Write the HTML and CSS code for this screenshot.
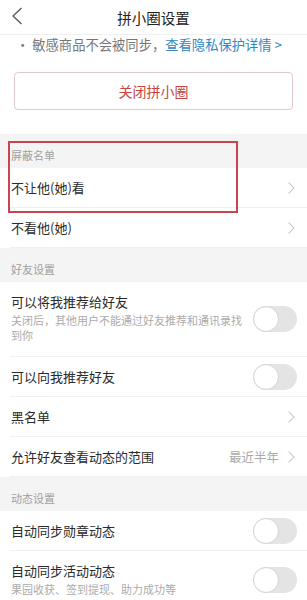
FILE: index.html
```html
<!DOCTYPE html>
<html lang="zh-CN">
<head>
    <meta charset="UTF-8">
    <meta name="viewport" content="width=device-width, initial-scale=1.0">
    <title>拼小圈设置</title>
    <link rel="stylesheet" href="styles.css">
</head>
<body>
    <div class="topbar">
        <svg class="back" width="12" height="18" viewBox="0 0 12 18"><path d="M10.5 1 L2 9 L10.5 17" fill="none" stroke="#555" stroke-width="1.3"/></svg>
        <div class="title">拼小圈设置</div>
    </div>

    <div class="notice">• 敏感商品不会被同步，<span class="link">查看隐私保护详情 &gt;</span></div>

    <div class="btn-wrap">
        <button class="btn-close">关闭拼小圈</button>
    </div>

    <!-- 屏蔽名单 -->
    <div class="marked">
        <div class="section-title">屏蔽名单</div>
        <div class="row">
            <span class="label">不让他(她)看</span>
            <span class="arrow"></span>
        </div>
        <div class="mark-box"></div>
    </div>
    <div class="row">
        <span class="label">不看他(她)</span>
        <span class="arrow"></span>
    </div>

    <!-- 好友设置 -->
    <div class="section-title">好友设置</div>
    <div class="row tall">
        <div class="text">
            <div class="label">可以将我推荐给好友</div>
            <div class="desc">关闭后，其他用户不能通过好友推荐和通讯录找<br>到你</div>
        </div>
        <span class="switch"></span>
    </div>
    <div class="row">
        <span class="label">可以向我推荐好友</span>
        <span class="switch"></span>
    </div>
    <div class="row">
        <span class="label">黑名单</span>
        <span class="arrow"></span>
    </div>
    <div class="row">
        <span class="label">允许好友查看动态的范围</span>
        <span class="value">最近半年</span>
        <span class="arrow"></span>
    </div>

    <!-- 动态设置 -->
    <div class="section-title">动态设置</div>
    <div class="row">
        <span class="label">自动同步勋章动态</span>
        <span class="switch"></span>
    </div>
    <div class="row tall short">
        <div class="text">
            <div class="label">自动同步活动动态</div>
            <div class="desc">果园收获、签到提现、助力成功等</div>
        </div>
        <span class="switch"></span>
    </div>
</body>
</html>
```

FILE: styles.css
```css
/* page basics */
body {
    margin: 0;
    width: 307px;
    background: #fff;
    color: #333;
    font-family: "Noto Sans CJK SC", "Noto Sans", sans-serif;
    overflow: hidden;
}
.topbar {
    height: 34px;
    display: flex;
    align-items: center;
    justify-content: center;
    position: relative;
    border-bottom: 1px solid #f0f0f0;
}
.back {
    position: absolute;
    left: 11px;
    top: 7px;
}
.title {
    font-size: 14.5px;
    color: #222;
}
.notice {
    padding: 0 0 0 16px;
    height: 20px;
    line-height: 20px;
    font-size: 13.3px;
    color: #777;
}
.link {
    color: #2f88c4;
}
.btn-wrap {
    padding: 17px 14px 24px;
}
.btn-close {
    width: 100%;
    height: 38px;
    border: 1px solid #e3c9c9;
    border-radius: 4px;
    background: #fff;
    color: #c64541;
    font-family: inherit;
    font-size: 14px;
    padding: 0;
}
/* grey group header */
.section-title {
    background: #f4f4f4;
    height: 34px;
    box-sizing: border-box;
    padding: 14px 0 0 11px;
    line-height: 14px;
    font-size: 11px;
    color: #a0a0a0;
}
.marked {
    position: relative;
}
.mark-box {
    position: absolute;
    left: 8px;
    top: 7px;
    width: 230px;
    height: 72px;
    box-sizing: border-box;
    border: 2px solid #c84450;
}
/* list rows */
.row {
    display: flex;
    align-items: center;
    height: 40px;
    margin-left: 10px;
    padding-right: 10px;
    border-bottom: 1px solid #f0f0f0;
    box-sizing: border-box;
}
.row.tall {
    height: 75px;
}
.row.short {
    height: 58px;
}
.row .label {
    flex: 1;
    padding-left: 1px;
    font-size: 13px;
    color: #2a2a2a;
}
.row .text {
    flex: 1;
    min-width: 0;
    align-self: flex-start;
    padding: 11px 0 0 1px;
}
.row .text .label {
    line-height: 18px;
    padding-left: 0;
}
.desc {
    font-size: 11px;
    line-height: 15px;
    color: #ababab;
    margin-top: 2px;
    white-space: nowrap;
}
.value {
    font-size: 12.5px;
    color: #aaa;
    margin-right: 6px;
}
.arrow {
    width: 7px;
    height: 7px;
    border-top: 1.2px solid #c8c8c8;
    border-right: 1.2px solid #c8c8c8;
    transform: rotate(45deg);
    margin-right: 4px;
}
/* toggle switch, off state */
.switch {
    position: relative;
    width: 44px;
    height: 26px;
    border-radius: 13px;
    background: #e4e4e4;
    flex-shrink: 0;
}
.switch::before {
    content: "";
    position: absolute;
    left: 0;
    top: 0;
    width: 26px;
    height: 26px;
    box-sizing: border-box;
    border-radius: 50%;
    background: #fff;
    border: 1px solid #d4d4d4;
}
```
